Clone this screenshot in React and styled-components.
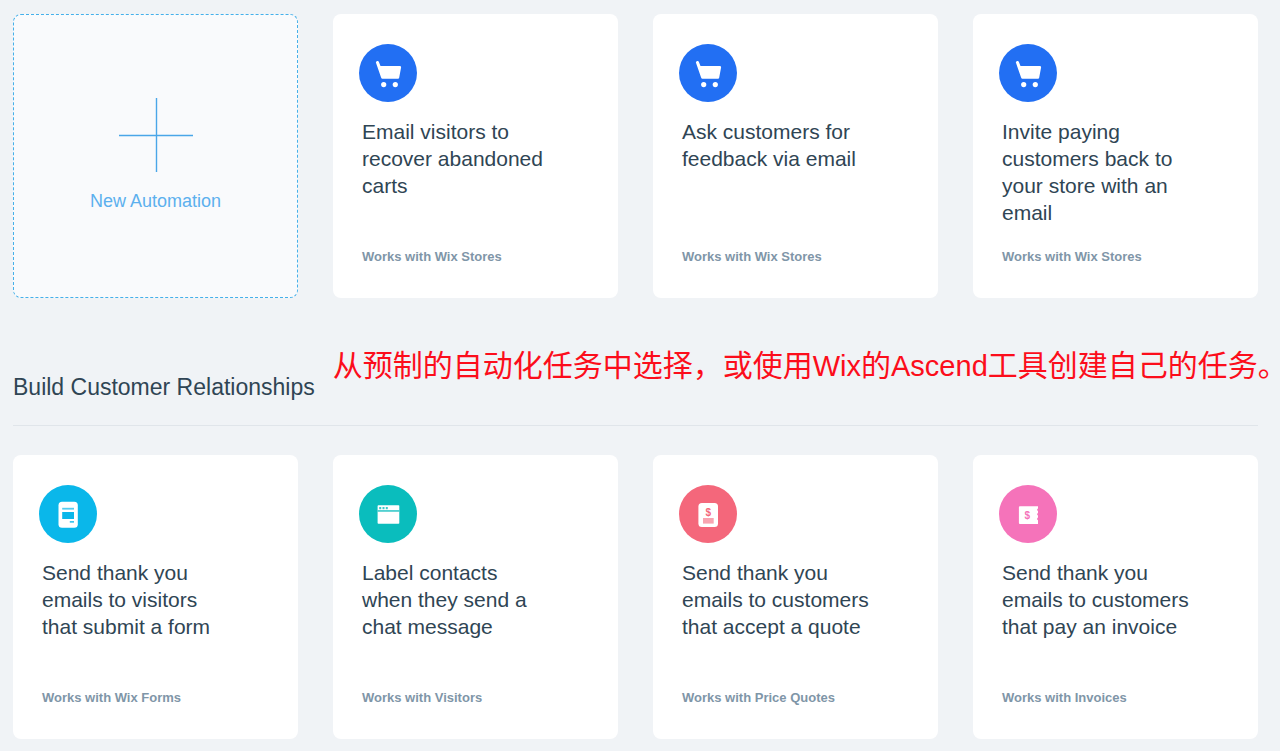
import React from "react";
import styled, { createGlobalStyle } from "styled-components";

const storeAutomations = [
  { icon: "cart", title: "Email visitors to recover abandoned carts", app: "Wix Stores" },
  { icon: "cart", title: "Ask customers for feedback via email", app: "Wix Stores" },
  { icon: "cart", title: "Invite paying customers back to your store with an email", app: "Wix Stores" }
];

const relationshipAutomations = [
  { icon: "form", title: "Send thank you emails to visitors that submit a form", app: "Wix Forms" },
  { icon: "chat", title: "Label contacts when they send a chat message", app: "Visitors" },
  { icon: "quote", title: "Send thank you emails to customers that accept a quote", app: "Price Quotes" },
  { icon: "invoice", title: "Send thank you emails to customers that pay an invoice", app: "Invoices" }
];

const icons = {
  cart: {
    color: "#226ff3",
    shape: (
      <g>
        <path
          d="M18.2 18.4h.5l1.9 4.9h20.2l-1.9 10.1H23.4z"
          stroke="#fff"
          strokeWidth="2.6"
          strokeLinejoin="round"
        />
        <circle cx="24.7" cy="40.6" r="2.6" />
        <circle cx="36.3" cy="40.6" r="2.6" />
      </g>
    )
  },
  form: {
    color: "#0ab7ea",
    shape: (
      <g>
        <rect x="19.5" y="16.7" width="19.3" height="26" rx="3.5" />
        <g fill="#0ab7ea">
          <rect x="23.2" y="22.8" width="11.8" height="1.8" opacity="0.7" />
          <rect x="23.2" y="27" width="11.8" height="7" />
          <rect x="30.8" y="36" width="4.2" height="1.7" opacity="0.8" />
        </g>
      </g>
    )
  },
  chat: {
    color: "#0abdbd",
    shape: (
      <g>
        <rect x="18.6" y="20.3" width="21.7" height="18.5" rx="0.8" />
        <g fill="#0abdbd">
          <rect x="18.6" y="25.3" width="21.7" height="1.3" />
          <rect x="20.2" y="22" width="2" height="2.2" opacity="0.8" />
          <rect x="23.5" y="22" width="2" height="2.2" opacity="0.8" />
          <rect x="26.8" y="22" width="2" height="2.2" opacity="0.8" />
        </g>
      </g>
    )
  },
  quote: {
    color: "#f4677b",
    shape: (
      <g>
        <rect x="19.4" y="18" width="19.6" height="24" rx="3.5" />
        <Currency x="29.3" y="30.6" fill="#f4677b">$</Currency>
        <rect x="24" y="33" width="10.7" height="5.6" fill="#f4677b" opacity="0.6" />
      </g>
    )
  },
  invoice: {
    color: "#f573ba",
    shape: (
      <g>
        <path d="M20.9 21.2H39v2.2a1.4 1.4 0 0 0 0 2.6v2a1.4 1.4 0 0 0 0 2.6v2a1.4 1.4 0 0 0 0 2.6v3.8H20.9a1 1 0 0 1-1-1V22.2a1 1 0 0 1 1-1z" />
        <Currency x="28.4" y="33.7" fill="#f573ba">$</Currency>
      </g>
    )
  }
};

function Currency({ children, ...props }) {
  return (
    <text
      {...props}
      fontFamily="Liberation Sans, Arial, sans-serif"
      fontSize="10"
      fontWeight="700"
      textAnchor="middle"
    >
      {children}
    </text>
  );
}

function AutomationCard({ icon, title, app }) {
  return (
    <Card>
      <Badge color={icons[icon].color} viewBox="0 0 58 58" aria-hidden="true">
        {icons[icon].shape}
      </Badge>
      <CardTitle>{title}</CardTitle>
      <WorksWith>Works with {app}</WorksWith>
    </Card>
  );
}

export default class App extends React.Component {
  render() {
    return (
      <Page>
        <GlobalStyle />
        <Grid>
          <NewAutomation type="button">
            <Plus viewBox="0 0 74 74" aria-hidden="true">
              <path d="M37.5 0v74M0 37.5h74" />
            </Plus>
            <span>New Automation</span>
          </NewAutomation>
          {storeAutomations.map(item => (
            <AutomationCard key={item.title} {...item} />
          ))}
        </Grid>
        <SectionHeader>
          <h2>Build Customer Relationships</h2>
          <Note lang="zh-CN">
            从预制的自动化任务中选择，或使用<Latin>Wix</Latin>的<Latin>Ascend</Latin>工具创建自己的任务<FullStop>。</FullStop>
          </Note>
        </SectionHeader>
        <Grid>
          {relationshipAutomations.map(item => (
            <AutomationCard key={item.title} {...item} />
          ))}
        </Grid>
      </Page>
    );
  }
}

const GlobalStyle = createGlobalStyle`
  * {
    box-sizing: border-box;
  }

  body {
    margin: 0;
    background: #f0f3f6;
    font-family: "Liberation Sans", Arial, "Noto Sans CJK SC", sans-serif;
    color: #2f4554;
  }

  h2, h3, p {
    margin: 0;
    font-weight: 400;
  }
`;

const Page = styled.main`
  padding: 14px 22px 11px 13px;
`;

const Grid = styled.div`
  display: grid;
  grid-template-columns: repeat(4, minmax(0, 1fr));
  grid-auto-rows: minmax(284px, auto);
  gap: 35px;
`;

const Card = styled.article`
  display: flex;
  flex-direction: column;
  padding: 30px 29px 33px;
  background: #fff;
  border-radius: 8px;
`;

const Badge = styled.svg`
  flex: none;
  width: 58px;
  height: 58px;
  margin: 0 0 16px -3px;
  border-radius: 50%;
  background: ${props => props.color};
  fill: #fff;
`;

const CardTitle = styled.h3`
  max-width: 190px;
  font-size: 21px;
  line-height: 27px;
`;

const WorksWith = styled.p`
  margin-top: auto;
  font-size: 13px;
  font-weight: 700;
  line-height: 16px;
  color: #7f96a8;
`;

const NewAutomation = styled.button`
  display: flex;
  flex-direction: column;
  align-items: center;
  justify-content: center;
  gap: 18px;
  padding: 0 0 2px;
  border: dashed 1px #45b0ea;
  border-radius: 8px;
  background: #f9fafc;
  color: #5cb0ee;
  font-family: inherit;
  font-size: 18px;
  line-height: 22px;
  cursor: pointer;

  &:hover {
    background: #fff;
  }
`;

const Plus = styled.svg`
  width: 74px;
  height: 74px;
  stroke: #4aa6e8;
  stroke-width: 1.4;
`;

const SectionHeader = styled.header`
  display: flex;
  align-items: flex-start;
  gap: 18px;
  margin-bottom: 29px;
  padding: 48px 0 24px;
  border-bottom: solid 1px #e0e5ea;

  h2 {
    flex: none;
    padding-top: 27px;
    font-size: 23px;
    line-height: 28px;
  }
`;

/* runs into the page's right padding so that it stays on one line */
const Note = styled.p`
  flex: 1;
  margin-right: -22px;
  font-size: 30px;
  line-height: 40px;
  color: #fc0d1b;
`;

const Latin = styled.span`
  font-size: 29px;
`;

const FullStop = styled.span`
  font-feature-settings: "halt";
`;
